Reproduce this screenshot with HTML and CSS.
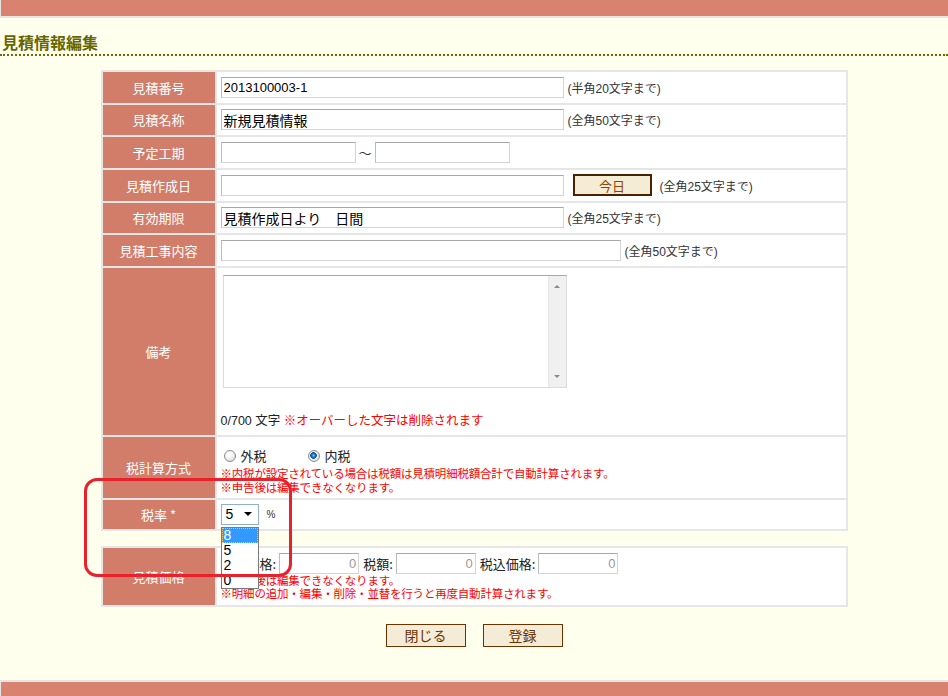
FILE: index.html
```html
<!DOCTYPE html>
<html lang="ja">
<head>
<meta charset="utf-8">
<title>見積情報編集</title>
<link rel="stylesheet" href="styles.css">
</head>
<body>
<div class="topbar"></div>
<h1 class="title">見積情報編集</h1>

<table class="form">
  <tr>
    <th>見積番号</th>
    <td><div class="line"><input class="txt w343 latin" type="text" value="2013100003-1"><span class="note">(半角20文字まで)</span></div></td>
  </tr>
  <tr>
    <th>見積名称</th>
    <td><div class="line"><input class="txt w343" type="text" value="新規見積情報"><span class="note">(全角50文字まで)</span></div></td>
  </tr>
  <tr>
    <th>予定工期</th>
    <td><div class="line"><input class="txt w135" type="text"><span class="tilde">～</span><input class="txt w135" type="text"></div></td>
  </tr>
  <tr>
    <th>見積作成日</th>
    <td><div class="line"><input class="txt w343" type="text"><button class="today" type="button">今日</button><span class="note wide">(全角25文字まで)</span></div></td>
  </tr>
  <tr>
    <th>有効期限</th>
    <td><div class="line"><input class="txt w343" type="text" value="見積作成日より　日間"><span class="note">(全角25文字まで)</span></div></td>
  </tr>
  <tr>
    <th>見積工事内容</th>
    <td><div class="line"><input class="txt w400" type="text"><span class="note">(全角50文字まで)</span></div></td>
  </tr>
  <tr class="memo-row">
    <th>備考</th>
    <td class="top">
      <div class="memo">
        <textarea class="memo-text"></textarea>
        <div class="sb"><span class="sb-up"></span><span class="sb-down"></span></div>
      </div>
      <div class="count">0/700 文字 <span class="red">※オーバーした文字は削除されます</span></div>
    </td>
  </tr>
  <tr class="tax-row">
    <th>税計算方式</th>
    <td class="top tax">
      <div class="radios">
        <span class="radio"></span><span class="rlabel">外税</span>
        <span class="radio on second"></span><span class="rlabel">内税</span>
      </div>
      <div class="warn">※内税が設定されている場合は税額は見積明細税額合計で自動計算されます。</div>
      <div class="warn">※申告後は編集できなくなります。</div>
    </td>
  </tr>
  <tr class="rate-row">
    <th>税率 *</th>
    <td>
      <div class="line">
        <div class="select">
          <span>5</span><span class="arrow"></span>
          <div class="dropdown">
            <div class="opt sel">8</div>
            <div class="opt">5</div>
            <div class="opt">2</div>
            <div class="opt">0</div>
          </div>
        </div>
        <span class="pct">%</span>
      </div>
    </td>
  </tr>
</table>

<table class="form price-table">
  <tr class="price-row">
    <th>見積価格</th>
    <td class="top price">
      <div class="line">
        <span>税抜価格:</span><input class="num" type="text" value="0">
        <span>税額:</span><input class="num" type="text" value="0">
        <span>税込価格:</span><input class="num" type="text" value="0">
      </div>
      <div class="warn tight">※申告後は編集できなくなります。</div>
      <div class="warn tight">※明細の追加・編集・削除・並替を行うと再度自動計算されます。</div>
    </td>
  </tr>
</table>

<div class="actions">
  <button class="btn" type="button">閉じる</button>
  <button class="btn" type="button">登録</button>
</div>

<div class="bottombar"></div>

<div class="annot"></div>
</body>
</html>
```

FILE: styles.css
```css
* {
  box-sizing: border-box;
}

html,
body {
  margin: 0;
  padding: 0;
}

body {
  width: 948px;
  height: 696px;
  overflow: hidden;
  position: relative;
  background: #ffffee;
  font-family: "Liberation Sans", "Noto Sans CJK JP", sans-serif;
  font-size: 13px;
  color: #222;
}

.topbar {
  height: 18px;
  background: #d8826f;
  border-bottom: 2px solid #e6e6e6;
  border-left: 1px solid #e6e6e6;
}

.title {
  margin: 0;
  padding: 14px 0 2px 2px;
  font-family: "Noto Sans CJK JP", sans-serif;
  font-size: 16px;
  line-height: 20px;
  font-weight: bold;
  color: #666600;
  border-bottom: 2px dotted #6b6b00;
}

.form {
  width: 747px;
  margin: 14px auto 0;
  border-collapse: separate;
  border-spacing: 2px;
  background: #e6e6e6;
}

.form th {
  width: 112px;
  padding: 0;
  background: #d17d69;
  color: #fff;
  font-family: "Noto Sans CJK JP", sans-serif;
  font-weight: normal;
  font-size: 13px;
  text-align: center;
  vertical-align: middle;
}

.form td {
  height: 30.67px;
  padding: 0 4px;
  background: #fff;
  vertical-align: middle;
}

.form td.top {
  vertical-align: top;
}

.line {
  display: flex;
  align-items: center;
}

.txt,
.num {
  height: 21px;
  margin: 0;
  padding: 0 2px;
  border: 1px solid #d4d4d4;
  border-top-color: #a8a8a8;
  border-left-color: #bcbcbc;
  background: #fff;
  font-family: "Liberation Sans", "Noto Sans CJK JP", sans-serif;
  font-size: 14px;
  color: #000;
  outline: none;
}

.txt.latin {
  font-size: 13px;
}

.w343 {
  width: 343px;
}

.w135 {
  width: 135px;
}

.w400 {
  width: 400px;
}

.note {
  margin-left: 4px;
  font-size: 12px;
  color: #333;
}

.note.wide {
  margin-left: 8px;
}

.tilde {
  margin: 0 3px;
  font-size: 13px;
  color: #333;
}

.today {
  width: 79px;
  height: 22px;
  margin: 0 0 0 9px;
  padding: 0;
  border: 2px solid #4a2200;
  background: #f5ecd6;
  color: #8b4500;
  font-family: "Noto Sans CJK JP", sans-serif;
  font-size: 13px;
}

/* 備考 */
.memo-row td {
  height: 167px;
}

.memo {
  display: flex;
  width: 344px;
  height: 113px;
  margin: 7px 0 0 2px;
  border: 1px solid #dcdcdc;
  border-top-color: #a8a8a8;
  background: #fff;
}

.memo-text {
  flex: 1;
  margin: 0;
  border: none;
  resize: none;
  outline: none;
  background: #fff;
}

.sb {
  width: 18px;
  display: flex;
  flex-direction: column;
  justify-content: space-between;
  align-items: center;
  padding: 9px 0 9px;
  background: #f0f0f0;
  border-left: 1px solid #e6e6e6;
}

.sb-up {
  border-bottom: 3px solid #8a8a8a;
  border-left: 3px solid transparent;
  border-right: 3px solid transparent;
}

.sb-down {
  border-top: 3px solid #8a8a8a;
  border-left: 3px solid transparent;
  border-right: 3px solid transparent;
}

.count {
  margin-top: 25px;
  font-size: 12.5px;
  line-height: 16px;
  color: #222;
}

.red {
  color: #ff0000;
}

/* 税計算方式 */
.tax-row td {
  height: 61px;
}

.form td.tax {
  padding-top: 9px;
}

.radios {
  display: flex;
  align-items: center;
  height: 20px;
}

.radio {
  width: 12px;
  height: 12px;
  margin-left: 3px;
  border-radius: 50%;
  border: 1px solid #8c8c8c;
  background: radial-gradient(circle at 40% 35%, #ffffff 0, #f4f4f4 40%, #cfcfcf 100%);
}

.radio.second {
  margin-left: 41px;
}

.radio.on {
  background: radial-gradient(circle at 45% 45%, #7fd0ff 0, #1c7fd6 1.5px, #0b4c96 3px, #f4f4f4 3.6px, #d0d0d0 100%);
}

.rlabel {
  margin-left: 5px;
  font-size: 13px;
  color: #222;
}

.warn {
  font-family: "Noto Sans CJK JP", sans-serif;
  font-size: 11.5px;
  line-height: 14px;
  letter-spacing: -0.2px;
  color: #ff0000;
}

.warn.tight {
  line-height: 13px;
}

/* 税率 */
.rate-row td {
  height: 29px;
}

.select {
  position: relative;
  display: flex;
  align-items: center;
  justify-content: space-between;
  width: 38px;
  height: 21px;
  padding: 0 6px 0 4px;
  border: 1px solid #8fb0cf;
  background: #fff;
  font-size: 14px;
  color: #000;
}

.arrow {
  border-top: 4px solid #000;
  border-left: 4px solid transparent;
  border-right: 4px solid transparent;
}

.dropdown {
  position: absolute;
  left: -1px;
  top: 22px;
  width: 38px;
  border: 1px solid #7a7a7a;
  background: #fff;
  z-index: 5;
}

.opt {
  height: 15px;
  padding-left: 2px;
  font-size: 14px;
  line-height: 15px;
  color: #000;
}

.opt.sel {
  background: #3399ff;
  color: #fff;
  outline: 1px dotted #f0c080;
  outline-offset: -1px;
}

.pct {
  margin-left: 8px;
  font-size: 10px;
  color: #333;
}

/* 見積価格 */
.price-table {
  margin-top: 15px;
}

.price-row td {
  height: 57px;
}

.form td.price {
  padding-top: 5px;
}

.price .line span {
  font-family: "Noto Sans CJK JP", sans-serif;
  font-size: 13px;
  color: #222;
}

.num {
  width: 80px;
  margin: 0 4px 0 3px;
  text-align: right;
  color: #999;
  font-size: 13px;
}

/* buttons */
.actions {
  display: flex;
  justify-content: center;
  gap: 17px;
  margin-top: 17px;
}

.btn {
  width: 80px;
  height: 23px;
  padding: 0;
  border: 1px solid #6b3300;
  background: #f5ecd8;
  color: #6b3300;
  font-family: "Noto Sans CJK JP", sans-serif;
  font-size: 14px;
}

.bottombar {
  height: 16px;
  margin-top: 33px;
  background: #d8826f;
  border-top: 2px solid #e6e6e6;
  border-left: 1px solid #e6e6e6;
}

.annot {
  position: absolute;
  left: 84px;
  top: 478px;
  width: 208px;
  height: 99px;
  border: 3px solid #e8212b;
  border-radius: 13px;
  pointer-events: none;
  z-index: 10;
}
```
